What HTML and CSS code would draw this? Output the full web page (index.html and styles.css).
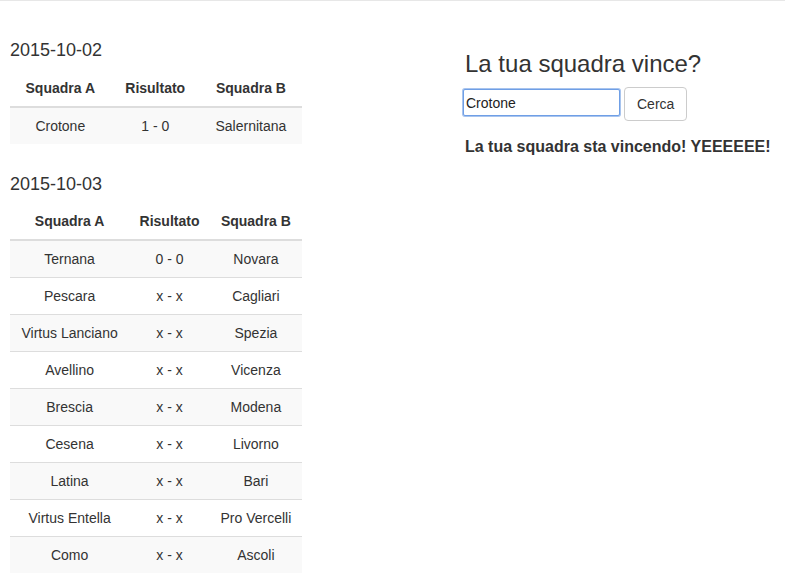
FILE: index.html
```html
<!DOCTYPE html>
<html lang="it">
<head>
<meta charset="utf-8">
<title>Serie B</title>
<link rel="stylesheet" href="styles.css">
</head>
<body>
<div class="topbar"></div>
<div class="page">
  <div class="left">
    <h4 class="date">2015-10-02</h4>
    <table class="table">
      <thead><tr><th>Squadra A</th><th>Risultato</th><th>Squadra B</th></tr></thead>
      <tbody>
        <tr><td>Crotone</td><td>1 - 0</td><td>Salernitana</td></tr>
      </tbody>
    </table>
    <h4 class="date second">2015-10-03</h4>
    <table class="table">
      <thead><tr><th>Squadra A</th><th>Risultato</th><th>Squadra B</th></tr></thead>
      <tbody>
        <tr><td>Ternana</td><td>0 - 0</td><td>Novara</td></tr>
        <tr><td>Pescara</td><td>x - x</td><td>Cagliari</td></tr>
        <tr><td>Virtus Lanciano</td><td>x - x</td><td>Spezia</td></tr>
        <tr><td>Avellino</td><td>x - x</td><td>Vicenza</td></tr>
        <tr><td>Brescia</td><td>x - x</td><td>Modena</td></tr>
        <tr><td>Cesena</td><td>x - x</td><td>Livorno</td></tr>
        <tr><td>Latina</td><td>x - x</td><td>Bari</td></tr>
        <tr><td>Virtus Entella</td><td>x - x</td><td>Pro Vercelli</td></tr>
        <tr><td>Como</td><td>x - x</td><td>Ascoli</td></tr>
      </tbody>
    </table>
  </div>
  <div class="right">
    <h3 class="title">La tua squadra vince?</h3>
    <form class="search">
      <input class="field" type="text" value="Crotone">
      <button class="btn" type="button">Cerca</button>
    </form>
    <p class="result">La tua squadra sta vincendo! YEEEEEE!</p>
  </div>
</div>
</body>
</html>
```
FILE: styles.css
```css
html, body {
  margin: 0;
  padding: 0;
  background: #fff;
}
body {
  font-family: "Liberation Sans", Arial, sans-serif;
  font-size: 14px;
  line-height: 20px;
  color: #333;
}
.topbar {
  height: 0;
  border-top: 1px solid #e7e7e7;
}
.page {
  display: flex;
  padding: 29px 0 0 10px;
}
.left {
  width: 292px;
  flex: none;
}
.right {
  margin-left: 163px;
}
.date {
  font-size: 18px;
  font-weight: 500;
  line-height: 20px;
  margin: 10px 0 10px;
}
.date.second {
  margin: 30px 0 9px;
}
.table {
  width: 100%;
  border-collapse: separate;
  border-spacing: 0;
  margin: 0;
}
.table th,
.table td {
  padding: 8px;
  text-align: center;
  line-height: 20px;
  vertical-align: top;
}
.table th {
  font-weight: bold;
  border-bottom: 2px solid #ddd;
}
.table tbody tr + tr td {
  border-top: 1px solid #ddd;
}
.table tbody tr:nth-child(odd) {
  background: #f9f9f9;
}
.title {
  font-size: 24px;
  font-weight: 500;
  line-height: 26.4px;
  margin: 21px 0 10px;
}
.search {
  display: flex;
  align-items: flex-start;
  gap: 4px;
  margin: 0;
}
.field {
  box-sizing: border-box;
  width: 157px;
  height: 27px;
  margin: 2px 0 0 -2px;
  padding: 1px 2px;
  font-family: "Liberation Sans", Arial, sans-serif;
  font-size: 14px;
  color: #222;
  border: 1px solid #6f9fe6;
  border-radius: 2px;
  box-shadow: 0 0 0 1px #a8c4ee;
  outline: none;
}
.btn {
  box-sizing: border-box;
  height: 34px;
  padding: 6px 12px;
  font-family: "Liberation Sans", Arial, sans-serif;
  font-size: 14px;
  line-height: 20px;
  color: #333;
  background: #fff;
  border: 1px solid #ccc;
  border-radius: 4px;
}
.result {
  font-size: 16px;
  font-weight: bold;
  margin: 16px 0 0;
  line-height: 20px;
}
```
